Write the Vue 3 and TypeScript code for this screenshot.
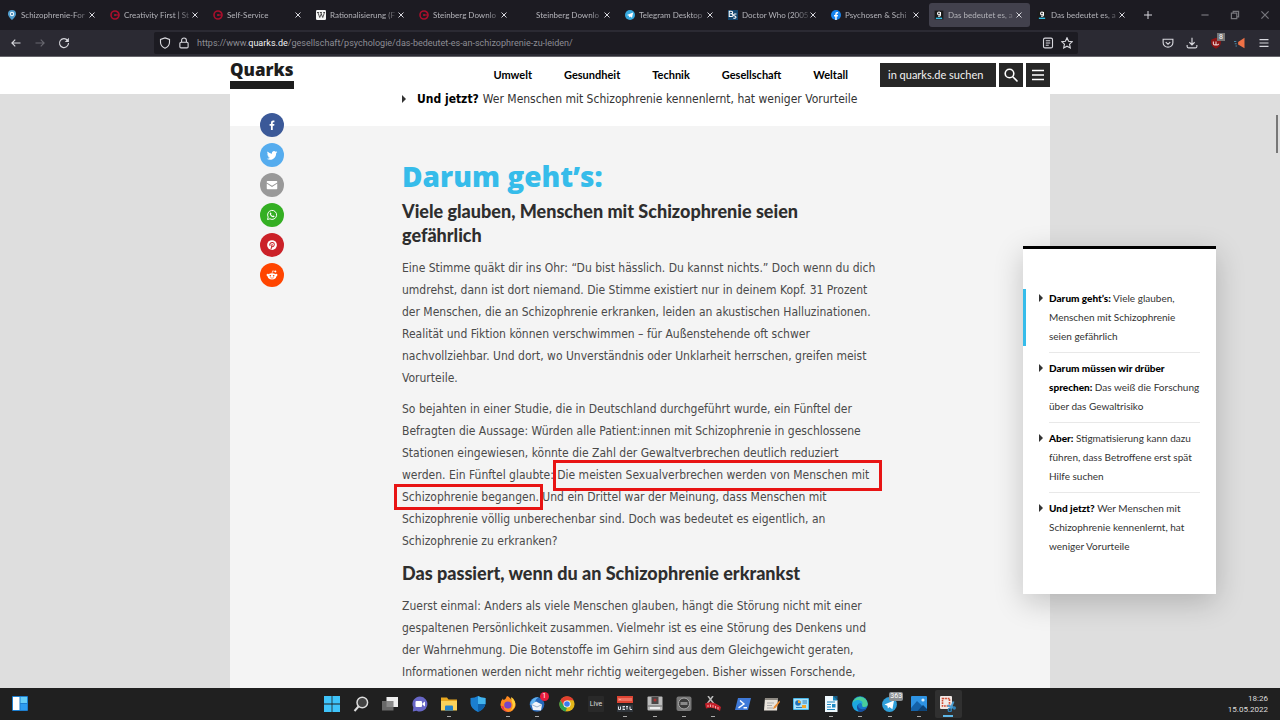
<script setup lang="ts">
import { ref } from 'vue'

interface Tab { title: string; icon: string; active?: boolean }
interface TaskIcon { name: string; art: string; running?: boolean; active?: boolean; label?: string; badge?: string }
interface TocEntry { lead: string[]; head: string; tail: string; rest: string[]; active?: boolean }

const steinberg = '<circle cx="8" cy="8" r="6.4" fill="none" stroke="#a80f2c" stroke-width="2.6"/><path d="M8 8h7" stroke="#a80f2c" stroke-width="2"/><circle cx="8" cy="8" r="1.800" fill="#a80f2c"/>'
const quarks = '<rect x="1" y="1" width="14" height="14" fill="#1b1b1b"/><circle cx="8" cy="5.4" r="2.3" fill="none" stroke="#fff" stroke-width="1.8"/><path d="M10.3 3v5.4q0 1.800-3.500 1.800" fill="none" stroke="#fff" stroke-width="1.800"/><path d="M3 13.300h10" stroke="#35c0e6" stroke-width="2.200"/>'

const tabs: Tab[] = [
  { title: 'Schizophrenie-For', icon: '<path d="M8 0a6.500 6.500 0 0 1 6.500 6.500C14.500 11 8 16 8 16S1.500 11 1.500 6.500A6.500 6.500 0 0 1 8 0z" fill="#4f9ccc"/><circle cx="8" cy="6.500" r="3.600" fill="#e8f4fb"/><circle cx="8" cy="6.500" r="1.600" fill="#2d6f9e"/>' },
  { title: 'Creativity First | St', icon: steinberg },
  { title: 'Self-Service', icon: steinberg },
  { title: 'Rationalisierung (F', icon: '<rect width="16" height="16" rx="2" fill="#f4f4f4"/><path d="M1.500 4h3.500M6.300 4h3.200M11.500 4h3M3 4l3 8 2.500-6M7.500 4l3.300 8L13.500 4" fill="none" stroke="#222" stroke-width="1.200"/>' },
  { title: 'Steinberg Downlo', icon: steinberg },
  { title: 'Steinberg Downlo', icon: '' },
  { title: 'Telegram Desktop', icon: '<circle cx="8" cy="8" r="8" fill="#36a9df"/><path d="M3 8l10-4-1.800 8.500-3-2.200-1.500 1.500-.4-2.500z" fill="#fff"/>' },
  { title: 'Doctor Who (2005', icon: '<rect width="16" height="16" fill="#12466e"/><path d="M2 2h3q2.500 0 2.500 1.800T5 6q3 0 3 2.200T5 10.500H2zM3.500 6H5" fill="none" stroke="#fff" stroke-width="1.700"/><path d="M13.500 6.500h-3q-1.500 0-1.500 1.600t1.800 1.600 1.900 1.700-1.700 1.800H8.500" fill="none" stroke="#fff" stroke-width="1.700"/>' },
  { title: 'Psychosen & Schi', icon: '<circle cx="8" cy="8" r="8" fill="#1683ee"/><path d="M6.800 16v-5.600H4.800V8h2V6.300q0-3 2.900-3h1.700v2.100h-1.200q-1.100 0-1.100 1.100V8h2.200l-.4 2.400H9.100V16z" fill="#fff"/>' },
  { title: 'Das bedeutet es, a', icon: quarks, active: true },
  { title: 'Das bedeutet es, a', icon: quarks }
]

const nav = ['Umwelt', 'Gesundheit', 'Technik', 'Gesellschaft', 'Weltall']
const query = ref('')

const shares = [
  { name: 'Facebook', cls: 'fb', art: '<path d="M6.600 14.500V9H4.800V6.700h1.800V5q0-3 2.900-3h1.700v2.200h-1.200q-1 0-1 1V6.700h2.200L10.900 9H9v5.500z" fill="#fff"/>' },
  { name: 'Twitter', cls: 'tw', art: '<path d="M15 3.900q-.8.400-1.600.5.900-.5 1.200-1.500-.8.500-1.800.7a2.900 2.900 0 0 0-4.900 2.600Q4.400 6 2 3.300q-1.200 2.300.9 3.900-.700 0-1.300-.4 0 2.300 2.300 2.900-.6.200-1.300 0 .6 2 2.700 2Q3.500 13.100 1 12.900q2 1.300 4.400 1.300c5.200 0 8.200-4.200 8.100-8.700q1-.700 1.500-1.600z" fill="#fff"/>' },
  { name: 'E-Mail', cls: 'ml', art: '<path d="M1 3.500q0-1 1-1h12q1 0 1 1v1L8 9 1 4.500zM1 6l7 4.500L15 6V12.500q0 1-1 1h-12q-1 0-1-1z" fill="#fff"/>' },
  { name: 'WhatsApp', cls: 'wa', art: '<path d="M2 14l.9-3.200a6 6 0 1 1 2.300 2.300z" fill="none" stroke="#fff" stroke-width="1.300"/><path d="M5.500 5q.8-.8 1.200 0l.5 1.200-.6.900q.8 1.500 2.300 2.200l.9-.8 1.500.8q.3 1.500-1.500 1.700Q6 10.800 5 6.800q-.1-1 .5-1.800z" fill="#fff"/>' },
  { name: 'Pinterest', cls: 'pi', art: '<circle cx="8" cy="8" r="6.500" fill="#fff"/><path d="M5.600 9.200q-1.200-1.800 0-3.400Q6.800 4.400 8.800 4.600q2.500.4 2.300 2.900-.4 2.700-2.400 2.700-1 0-1.300-.8M8.300 6.500 6.600 14" fill="none" stroke="#cb2128" stroke-width="1.400"/>' },
  { name: 'Reddit', cls: 're', art: '<ellipse cx="8" cy="9.800" rx="5.700" ry="4.200" fill="#fff"/><circle cx="2.400" cy="8" r="1.600" fill="#fff"/><circle cx="13.600" cy="8" r="1.600" fill="#fff"/><path d="M8 6l.8-3.500 3.500.8" fill="none" stroke="#fff" stroke-width=".9"/><circle cx="12.600" cy="3.300" r="1.200" fill="#fff"/><circle cx="5.800" cy="9" r="1.100" fill="#ff4500"/><circle cx="10.200" cy="9" r="1.100" fill="#ff4500"/><path d="M5.700 11.500q2.300 1.500 4.600 0" fill="none" stroke="#ff4500" stroke-width=".8"/>' }
]

const first = [
  'Eine Stimme quäkt dir ins Ohr: “Du bist hässlich. Du kannst nichts.” Doch wenn du dich',
  'umdrehst, dann ist dort niemand. Die Stimme existiert nur in deinem Kopf. 31 Prozent',
  'der Menschen, die an Schizophrenie erkranken, leiden an akustischen Halluzinationen.',
  'Realität und Fiktion können verschwimmen – für Außenstehende oft schwer',
  'nachvollziehbar. Und dort, wo Unverständnis oder Unklarheit herrschen, greifen meist',
  'Vorurteile.'
]
const second = [
  'So bejahten in einer Studie, die in Deutschland durchgeführt wurde, ein Fünftel der',
  'Befragten die Aussage: Würden alle Patient:innen mit Schizophrenie in geschlossene',
  'Stationen eingewiesen, könnte die Zahl der Gewaltverbrechen deutlich reduziert',
  'werden. Ein Fünftel glaubte: Die meisten Sexualverbrechen werden von Menschen mit',
  'Schizophrenie begangen. Und ein Drittel war der Meinung, dass Menschen mit',
  'Schizophrenie völlig unberechenbar sind. Doch was bedeutet es eigentlich, an',
  'Schizophrenie zu erkranken?'
]
const third = [
  'Zuerst einmal: Anders als viele Menschen glauben, hängt die Störung nicht mit einer',
  'gespaltenen Persönlichkeit zusammen. Vielmehr ist es eine Störung des Denkens und',
  'der Wahrnehmung. Die Botenstoffe im Gehirn sind aus dem Gleichgewicht geraten,',
  'Informationen werden nicht mehr richtig weitergegeben. Bisher wissen Forschende,'
]

const toc: TocEntry[] = [
  { lead: [], head: 'Darum geht’s:', tail: 'Viele glauben,', rest: ['Menschen mit Schizophrenie', 'seien gefährlich'], active: true },
  { lead: ['Darum müssen wir drüber'], head: 'sprechen:', tail: 'Das weiß die Forschung', rest: ['über das Gewaltrisiko'] },
  { lead: [], head: 'Aber:', tail: 'Stigmatisierung kann dazu', rest: ['führen, dass Betroffene erst spät', 'Hilfe suchen'] },
  { lead: [], head: 'Und jetzt?', tail: 'Wer Menschen mit', rest: ['Schizophrenie kennenlernt, hat', 'weniger Vorurteile'] }
]

const tasks: TaskIcon[] = [
  { name: 'Start', art: '<path d="M0 0h7.600v7.600H0zM8.400 0H16v7.600H8.400zM0 8.400h7.600V16H0zM8.400 8.400H16V16H8.400z" fill="#3fc4fa"/>' },
  { name: 'Suche', art: '<circle cx="9.300" cy="6.500" r="5.300" fill="#444" stroke="#ddd" stroke-width="1.500"/><path d="M5.500 10.500 1.500 15" stroke="#ddd" stroke-width="2"/>' },
  { name: 'Aktive Anwendungen', art: '<rect x="4.500" y="1" width="11.500" height="10" fill="#eee"/><rect x="0" y="5" width="11.500" height="9.500" fill="#777" opacity=".85"/>' },
  { name: 'Chat', art: '<path d="M8 .5a7.500 7.500 0 1 1-3.500 14.200L.800 15.500l.5-4A7.500 7.500 0 0 1 8 .5z" fill="#6867c7"/><rect x="3.500" y="5" width="6.500" height="6" rx="1" fill="#fff"/><path d="M10.500 7.300 13 5.500v5l-2.500-1.800z" fill="#fff"/>' },
  { name: 'Explorer', running: true, art: '<path d="M0 1.500h6l1.500 2H16V14H0z" fill="#e9a820"/><path d="M0 5h16v9.500H0z" fill="#fbd35b"/><path d="M4 10.500q0-1 1-1h6q1 0 1 1v4H4z" fill="#2583c9"/>' },
  { name: 'Sicherheit', art: '<path d="M8 0q3 2 7.500 2v5.500Q15 13 8 16 1 13 .5 7.500V2Q5 2 8 0z" fill="#1b7fd0"/><path d="M8 0q3 2 7.500 2v6H8z" fill="#43b5ee"/><path d="M8 8h7.500Q14.500 13 8 16z" fill="#0f63ad"/>' },
  { name: 'Firefox', running: true, art: '<path d="M14 4q2 3 1.500 6A7.600 7.600 0 0 1 .500 9Q.300 5 3 2.500q0 1 .800 1.500Q6 3 7 0q3 1 4.500 4 1-.8.800-2.500Q13.500 2.500 14 4z" fill="#ff8a21"/><path d="M11 1q4 3 4.300 6.500-.3 5-5 7.500 3.500-4 2-8Q11 3 11 1z" fill="#ffd23a"/><circle cx="7.800" cy="9" r="3.600" fill="#7646c9"/><path d="M1 10q2 6 8 5.800-5-.5-5.500-5.600z" fill="#ee3256"/>' },
  { name: 'Thunderbird', running: true, badge: '1', art: '<circle cx="8" cy="8.500" r="7.300" fill="#2466b8"/><path d="M1 9q1-8 9-8-4 2-4 6z" fill="#61b2ef"/><path d="M2.500 8.500 7 5.500l6 3-1 6-8-.5z" fill="#f1f4fa"/><path d="M2.500 8.500 8 11l5-2.500" stroke="#9bb3cf" fill="none"/>' },
  { name: 'Chrome', art: '<circle cx="8" cy="8" r="7.600" fill="#e3b71a"/><path d="M1.400 4.200A7.600 7.600 0 0 1 14.700 4.300H8L4.700 10z" fill="#e2402f"/><path d="M1.400 4.200 4.800 10 8 11.700l-1.500 3.800A7.600 7.600 0 0 1 1.400 4.200z" fill="#2ea150"/><circle cx="8" cy="8" r="3.600" fill="#fff"/><circle cx="8" cy="8" r="2.800" fill="#3b7ced"/>' },
  { name: 'Ableton', label: 'Live', art: '<rect width="16" height="16" rx="1" fill="#292929"/>' },
  { name: 'Mixer', running: true, art: '<path d="M0 0h16v7H0z" fill="#dd4433"/><path d="M2 2v3M2 3.500h2M4 2v3M6 2v3M8 2v3M10 2v3M12 2v3M14 2v3" stroke="#ff9b8c"/><path d="M0 8.500h16V16H0z" fill="#30353b"/><path d="M1.500 10.500v3h2v-3M5.500 10.500h2.500M5.500 12h2M5.500 13.500h2.500M10 10.500v3M9 10.500h2M13 10.500v3h2" fill="none" stroke="#dce3ea"/>' },
  { name: 'Sampler', running: true, art: '<rect x=".5" y=".5" width="15" height="14" rx="1" fill="#bcbcbc"/><rect x="4.500" y="1" width="7" height="7" fill="#4b4848"/><circle cx="8" cy="4" r="1.500" fill="#a33"/><path d="M1 10h14" stroke="#6b6b6b"/><rect x="3" y="11" width="10" height="2" fill="#eee"/>' },
  { name: 'Rekorder', running: true, art: '<rect x=".5" y=".5" width="15" height="14.500" rx="2" fill="#777"/><circle cx="8" cy="7.500" r="5.500" fill="#3b3b3b" stroke="#aaa"/><path d="M4.500 6h7v3h-7z" fill="#8a8a8a"/>' },
  { name: 'Schnitt', running: true, art: '<path d="M3 0l9 12M8 0 2 8" stroke="#bbb" stroke-width="1.500"/><path d="M0 7.500q8-3 16 3.500l-1 4Q8 10 1 12.500z" fill="#c3202a"/><path d="M3 9v2M5.500 8.500v2.500M8 9v2.500M10.500 10v2.500M13 11v2.500" stroke="#f3aaaa"/>' },
  { name: 'PowerShell', art: '<path d="M3 2h13l-3 12H0z" fill="#3f7ad9"/><path d="M5 4.500 9 8l-5.500 3.800M8.500 11.800h3.500" fill="none" stroke="#fff" stroke-width="1.400"/>' },
  { name: 'Editor', art: '<path d="M1 2h13l-1 12.500H0z" fill="#e9e4dc"/><path d="M1 2h13v2H1z" fill="#8f8b84"/><path d="M3 7h7M3 9.500h5M3 12h6" stroke="#aaa"/><path d="M15.500 4.500 10 10.500l-1 2.500 2.500-1 4.500-6z" fill="#e88b32"/>' },
  { name: 'Systemsteuerung', art: '<rect x="0" y="2" width="16" height="12" rx="1" fill="#4bb8ea"/><rect x="1" y="3" width="14" height="10" fill="#a9e1fa"/><circle cx="5" cy="7" r="2.800" fill="#2271b8"/><path d="M5 7V4.200A2.800 2.800 0 0 1 7.800 7z" fill="#f0a52a"/><path d="M9.500 5H14M9.500 7H14M3 11.500h10" stroke="#2c7fba"/><rect x="9" y="9" width="4" height="3" fill="#f0a52a"/>' },
  { name: 'Writer', running: true, art: '<path d="M2 0h8l4.500 4.500V16H2z" fill="#eef8fd"/><path d="M10 0v4.500h4.500z" fill="#1086bf"/><path d="M10 0h4.500v4.500" fill="#155a82"/><path d="M4 6h8M4 8.500h4M4 11h4M4 13.500h8" stroke="#1c8ac6" stroke-width="1.200"/><rect x="9" y="8" width="3.500" height="3.500" fill="#1c8ac6"/>' },
  { name: 'Edge', running: true, art: '<circle cx="8" cy="8" r="7.800" fill="#1679cb"/><path d="M.4 7A7.800 7.800 0 0 1 15.800 8q0 3-3.600 3-2.500 0-2-2Q9.500 5.500 6 5.500 2 5.500.400 7z" fill="#49cf9b"/><path d="M.3 7.500Q2 3.500 7 4q4 1 3.600 4Q9 6.500 7 7.500q-3 2.500-.5 8Q.200 14 .300 7.500z" fill="#1da8df"/><path d="M6.500 7.800Q5 12 9 13q3 .8 5.500-1-2.500 4-7 3.800Q3 12 6.500 7.800z" fill="#164da0"/>' },
  { name: 'Telegram', running: true, badge: '363', art: '<circle cx="7.500" cy="8.500" r="7.400" fill="#2f9fd9"/><path d="M2.500 8.500l9.500-4-1.600 8.700-3-2.200-1.500 1.500-.5-2.700z" fill="#fff"/>' },
  { name: 'Fotos', running: true, art: '<rect width="16" height="15" rx="1" fill="#2e93e3"/><path d="M0 12 6 5l10 9.500q0 .5-1 .5H1q-1 0-1-1z" fill="#1462a8"/><path d="M6.500 15 12 9l4 4v1q0 1-1 1z" fill="#0d4478"/><circle cx="12" cy="4" r="1.600" fill="#d8effc"/>' },
  { name: 'Snipping Tool', running: true, active: true, art: '<rect x="0" y="0" width="12" height="13" rx="1" fill="#f2e9e6"/><rect x="2.500" y="2.500" width="7" height="7.500" fill="none" stroke="#cf4a32" stroke-width="1.600" stroke-dasharray="1.800 .8"/><path d="M13.500 5.500 10.500 13M7.500 9.500l7 2.500" stroke="#4c9dd1" stroke-width="2"/><circle cx="9.800" cy="14" r="1.600" fill="none" stroke="#2d80b8" stroke-width="1.400"/><circle cx="14.300" cy="12" r="1.700" fill="#2d80b8"/>' }
]
</script>

<template>
  <div class="desktop">
    <header class="chrome">
      <div class="tabs" role="tablist">
        <div v-for="(t, i) in tabs" :key="i" class="tab" :class="{ active: t.active }">
          <svg class="fav" viewBox="0 0 16 16" v-html="t.icon" />
          <button class="title" role="tab" type="button">{{ t.title }}</button>
          <button class="close" type="button" aria-label="Tab schließen">
            <svg viewBox="0 0 8 8"><path d="M1.500 1.500l5 5M6.500 1.500l-5 5" /></svg>
          </button>
        </div>
        <button class="plus" type="button" aria-label="Neuer Tab"><svg viewBox="0 0 10 10"><path d="M5 1v8M1 5h8" /></svg></button>
        <div class="window">
          <button type="button" aria-label="Minimieren"><svg viewBox="0 0 10 10"><path d="M2 5h6" /></svg></button>
          <button type="button" aria-label="Verkleinern"><svg viewBox="0 0 10 10"><path d="M2 3.500h4.500V8H2zM3.500 3.500V2H8v4.500H6.500" /></svg></button>
          <button type="button" aria-label="Schließen"><svg viewBox="0 0 10 10"><path d="M2 2l6 6M8 2l-6 6" /></svg></button>
        </div>
      </div>
      <div class="toolbar">
        <div class="history">
          <button type="button" aria-label="Zurück"><svg viewBox="0 0 16 16"><path d="M14 8H2.500M7 3.500 2.500 8 7 12.500" /></svg></button>
          <button type="button" class="dim" aria-label="Vor"><svg viewBox="0 0 16 16"><path d="M2 8h11.500M9 3.500 13.500 8 9 12.500" /></svg></button>
          <button type="button" aria-label="Neu laden"><svg viewBox="0 0 16 16"><path d="M12.800 4.500A6 6 0 1 0 14 8" /><path d="M14.500 1v5.500H9z" class="solid" /></svg></button>
        </div>
        <div class="address">
          <svg viewBox="0 0 16 16"><path d="M8 1.200l6 2.100V7c0 4-2.500 6.500-6 8-3.500-1.500-6-4-6-8V3.300z" /></svg>
          <svg viewBox="0 0 16 16"><rect x="2.500" y="7" width="11" height="7.500" rx="1.500" /><path d="M4.800 7V4.500a3.200 3.200 0 0 1 6.400 0V7" /></svg>
          <a class="url" href="#">https://www.<b>quarks.de</b>/gesellschaft/psychologie/das-bedeutet-es-an-schizophrenie-zu-leiden/</a>
          <svg viewBox="0 0 16 16"><rect x="2" y="1.500" width="12" height="13" rx="2" /><path d="M5 5h6M5 8h6M5 11h4" /></svg>
          <svg viewBox="0 0 16 16"><path d="M8 1l2.100 4.600 5 .6-3.700 3.400 1 5L8 12.200l-4.400 2.400 1-5L.900 6.200l5-.6z" /></svg>
        </div>
        <div class="tools">
          <button type="button" aria-label="Pocket"><svg viewBox="0 0 16 16"><path d="M1.500 3h13v4.500a6.500 6 0 0 1-13 0zM5 6.800l3 2.700 3-2.700" /></svg></button>
          <button type="button" aria-label="Downloads"><svg viewBox="0 0 16 16"><path d="M8 1v9M4.500 7 8 10.500 11.500 7M1.500 10.500v2q0 2 2 2h9q2 0 2-2v-2" /></svg></button>
          <button type="button" class="blocker" aria-label="Werbeblocker"><svg viewBox="0 0 16 16"><path d="M8 1 14.500 3.500V8q-.5 5-6.500 7.500Q2 13 1.500 8V3.500z" fill="#8d1414" stroke="none" /><path d="M4.500 6v3q0 1.500 1.700 1.500T8 9V6m0 3q0 1.500 1.700 1.500T11.500 9" stroke="#e9c9c9" /></svg><span>8</span></button>
          <button type="button" aria-label="Ansagen"><svg viewBox="0 0 16 16"><path d="M5.500 6.500 14 1v14l-8.500-5z" fill="#ef7146" stroke="none" /><path d="M0 6h3M1 9h2.500M2 12h2" stroke="#4b89a6" /></svg></button>
          <button type="button" aria-label="Menü"><svg viewBox="0 0 16 16"><path d="M2 3.500h12M2 8h12M2 12.500h12" /></svg></button>
        </div>
      </div>
    </header>

    <main class="page">
      <div class="site-head">
        <div class="site-inner">
          <a class="logo" href="#">Quarks</a>
          <nav><a v-for="n in nav" :key="n" href="#">{{ n }}</a></nav>
          <form class="search" @submit.prevent>
            <input v-model="query" type="text" aria-label="in quarks.de suchen" placeholder="in quarks.de suchen">
            <button type="submit" aria-label="Suchen"><svg viewBox="0 0 16 16"><circle cx="6.500" cy="6.500" r="4.300" /><path d="M9.800 9.800 14.500 14.500" /></svg></button>
            <button type="button" aria-label="Menü"><svg viewBox="0 0 16 16"><path d="M2 3.500h12M2 8h12M2 12.500h12" /></svg></button>
          </form>
        </div>
      </div>

      <article class="column">
        <ul class="intro"><li><b>Und jetzt?</b> Wer Menschen mit Schizophrenie kennenlernt, hat weniger Vorurteile</li></ul>
        <section class="story">
          <h1>Darum geht’s:</h1>
          <h2>Viele glauben, Menschen mit Schizophrenie seien<br>gefährlich</h2>
          <p><span v-for="l in first" :key="l">{{ l }}</span></p>
          <p class="marked"><span v-for="l in second" :key="l">{{ l }}</span><i class="mark one" /><i class="mark two" /></p>
          <h2>Das passiert, wenn du an Schizophrenie erkrankst</h2>
          <p><span v-for="l in third" :key="l">{{ l }}</span></p>
        </section>
        <div class="share">
          <a v-for="s in shares" :key="s.name" :class="s.cls" href="#" :aria-label="s.name"><svg viewBox="0 0 16 16" v-html="s.art" /></a>
        </div>
      </article>

      <aside class="toc">
        <a v-for="e in toc" :key="e.head" href="#" :class="{ current: e.active }">
          <span class="entry">
            <b v-for="l in e.lead" :key="l">{{ l }}</b>
            <span><strong>{{ e.head }}</strong> {{ e.tail }}</span>
            <span v-for="l in e.rest" :key="l">{{ l }}</span>
          </span>
        </a>
      </aside>
      <div class="thumb" />
    </main>

    <footer class="taskbar">
      <button type="button" class="widgets" aria-label="Widgets"><svg viewBox="0 0 16 16"><rect width="16" height="15" rx="1" fill="#1d7fd0" /><rect x="1" y="1" width="6.500" height="13" fill="#fff" /><rect x="8.500" y="1" width="6.500" height="6" fill="#66cdf7" /><rect x="8.500" y="8" width="6.500" height="6" fill="#2d9cf0" /></svg></button>
      <div class="apps">
        <button v-for="a in tasks" :key="a.name" type="button" :aria-label="a.name" :class="{ running: a.running, active: a.active }">
          <svg viewBox="0 0 16 16" v-html="a.art" />
          <span v-if="a.label" class="label">{{ a.label }}</span>
          <span v-if="a.badge" class="badge" :class="{ wide: a.badge.length > 1 }">{{ a.badge }}</span>
        </button>
      </div>
      <time class="clock"><span>18:26</span><span>15.05.2022</span></time>
    </footer>
  </div>
</template>

<style>
body { margin: 0; }
</style>

<style scoped>
* { box-sizing: border-box; }
.desktop { height: 100vh; display: flex; flex-direction: column; overflow: hidden; font-family: Roboto, "Open Sans", sans-serif; }
button { border: 0; padding: 0; margin: 0; background: none; font: inherit; color: inherit; display: flex; align-items: center; justify-content: center; }
a { color: inherit; text-decoration: none; }
svg { display: block; flex: none; }

.chrome { flex: none; background: #2b2a33; color: #d0d0d6; border-bottom: 1px solid #66656b; }
.chrome svg { fill: none; stroke: #d8d8de; stroke-width: 1.5; }
.tabs { height: 30px; background: #1c1b22; display: flex; align-items: center; gap: 2px; padding-left: 2px; }
.tab { flex: 0 1 101px; height: 24px; min-width: 0; display: flex; align-items: center; gap: 4px; padding: 0 7px 0 5px; border-radius: 3px; font: 8px/12px Lato, sans-serif; color: #b4b4ba; }
.tab.active { background: #42414d; }
.chrome .fav { width: 10px; height: 10px; stroke: none; }
.title { flex: 1; display: block; white-space: nowrap; text-align: left; mask-image: linear-gradient(to right, #000 80%, rgba(0, 0, 0, .2)); }
.close { flex: none; margin-left: -4px; }
.close svg { width: 8px; height: 8px; stroke-width: 1; }
.plus { width: 26px; height: 24px; }
.plus svg { width: 10px; height: 10px; stroke-width: 1; }
.window { margin-left: auto; display: flex; }
.window button { width: 30px; height: 24px; }
.window svg { width: 12px; height: 12px; stroke-width: 1; stroke: #77777d; }
.toolbar { height: 26px; display: flex; align-items: center; }
.toolbar svg { width: 12px; height: 12px; }
.history { width: 154px; flex: none; display: flex; gap: 12px; padding-left: 10px; }
.history .dim { opacity: .35; }
.history .solid { fill: #d8d8de; stroke: none; }
.address { flex: 1; height: 22px; background: #1c1b22; border-radius: 2px; display: flex; align-items: center; gap: 7px; padding: 0 5px; min-width: 0; }
.url { flex: 1; font-size: 9px; color: #8d8d94; white-space: nowrap; overflow: hidden; }
.url b { font-weight: 400; color: #f2f2f5; }
.tools { width: 202px; flex: none; display: flex; justify-content: flex-end; gap: 12px; padding-right: 10px; }
.blocker { position: relative; }
.blocker span { position: absolute; top: -4px; right: -3px; padding: 0 2px; font-size: 7px; line-height: 8px; background: #777; color: #fff; }

.page { position: relative; flex: 1; min-height: 0; overflow: hidden; background: #dedede; display: flex; flex-direction: column; }
.site-head { flex: none; background: #fff; }
.site-inner { max-width: 820px; height: 37px; margin: 0 auto; padding-bottom: 2px; display: flex; align-items: center; color: #111; font: 11px/16px Lato, sans-serif; }
.logo { height: 28px; border-bottom: 8px solid #1d1d1d; font: 800 17px/17px "Open Sans", sans-serif; color: #1d1d1d; }
nav { margin-left: auto; display: flex; gap: 32px; font-weight: 700; color: #000; }
.search { margin-left: 32px; display: flex; gap: 3px; }
.search input { width: 116px; height: 24px; border: 0; border-radius: 0; padding: 0 0 0 8px; background: #262626; color: #fff; font: inherit; outline: 0; }
.search input::placeholder { color: #f2f2f2; opacity: 1; }
.search button { width: 24px; height: 24px; background: #262626; }
.search svg { width: 16px; height: 16px; fill: none; stroke: #fff; stroke-width: 1.6; }

.column { position: relative; flex: 1; width: 100%; max-width: 820px; margin: 0 auto; background: #f4f4f4; font: 12px/22px "DejaVu Sans Condensed", "Open Sans", sans-serif; color: #4a4a4a; }
.intro { margin: 0; list-style: none; background: #fff; padding: 0 0 22px 172px; line-height: 10px; color: #333; }
.intro li { display: flex; align-items: center; gap: 4px; white-space: nowrap; }
.intro li::before { content: ""; border: 4px solid transparent; border-left-color: #333; margin-right: 3px; }
.intro b { color: #000; }
.story { padding: 32px 0 0 172px; }
h1 { margin: 0 0 5px; font: 800 28px/36px "Open Sans", sans-serif; color: #36bcea; }
h2 { margin: 0 0 10px; font: 900 18px/24px Lato, sans-serif; color: #2e2e2e; white-space: nowrap; }
p { margin: 0 0 9px; }
p span { display: block; white-space: nowrap; }
.marked { position: relative; }
.mark { position: absolute; border: 3px solid #e81414; }
.mark.one { left: 151px; top: 62px; width: 329px; height: 31px; }
.mark.two { left: -8px; top: 86px; width: 149px; height: 26px; }
.share { position: absolute; left: 30px; top: 19px; display: flex; flex-direction: column; gap: 6px; }
.share a { width: 24px; height: 24px; border-radius: 50%; display: flex; align-items: center; justify-content: center; }
.share svg { width: 12px; height: 12px; }
.fb { background: #3b5998; }
.tw { background: #55acee; }
.ml { background: #999; }
.wa { background: #34af23; }
.pi { background: #cb2128; }
.re { background: #ff4500; }

.toc { position: absolute; right: 64px; top: 189px; width: 193px; padding: 40px 16px 38px 0; background: #fff; border-top: 3px solid #000; box-shadow: 0 8px 28px rgba(0, 0, 0, .2); font: 10px/19px Lato, sans-serif; color: #333; }
.toc a { display: flex; padding-left: 16px; }
.toc a::before { content: ""; flex: none; height: 0; margin: 5px 6px 0 0; border: 4px solid transparent; border-left: 4px solid #333; border-right: 0; }
.toc a.current { background: linear-gradient(#36bcea, #36bcea) 0 0 / 3px 57px no-repeat; }
.entry { flex: 1; }
.toc a:not(:last-child) .entry { border-bottom: 1px solid #e8e8e8; padding-bottom: 6px; margin-bottom: 6px; }
.entry > * { display: block; white-space: nowrap; }
.toc b, .toc strong { font-weight: 900; color: #000; }
.thumb { position: absolute; right: 2px; top: 58px; width: 2px; height: 38px; background: #777; }

.taskbar { flex: none; height: 32px; background: #202020; color: #ddd; display: grid; grid-template-columns: 1fr 646px 1fr; align-items: center; }
.widgets { justify-self: start; margin-left: 12px; }
.taskbar svg { width: 16px; height: 16px; }
.apps { display: grid; grid-template-columns: repeat(22, 1fr); justify-items: center; }
.apps button { position: relative; width: 27px; height: 28px; border-radius: 2px; }
.apps .active { background: #303030; }
.apps .running::after { content: ""; position: absolute; bottom: 1px; left: 50%; margin-left: -2px; width: 4px; height: 1px; background: #aaa; }
.apps .active::after { margin-left: -5px; width: 10px; height: 2px; background: #5fb8e8; }
.label { position: absolute; font-size: 7px; line-height: 8px; color: #ddd; }
.badge { position: absolute; top: 2px; right: 2px; min-width: 9px; height: 9px; border-radius: 5px; background: #e81c3c; color: #fff; font-size: 7px; line-height: 9px; text-align: center; }
.badge.wide { right: 0; padding: 0 1px; border-radius: 2px; background: #8b8f92; }
.clock { justify-self: end; margin-right: 12px; display: flex; flex-direction: column; align-items: flex-end; font-size: 8px; line-height: 11px; }
</style>
